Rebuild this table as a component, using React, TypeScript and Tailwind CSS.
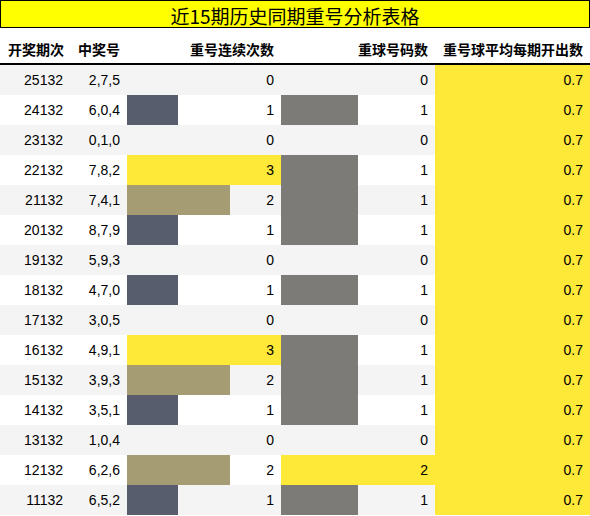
const rows = [
  { period: "25132", nums: "2,7,5", streak: 0, repeat: 0 },
  { period: "24132", nums: "6,0,4", streak: 1, repeat: 1 },
  { period: "23132", nums: "0,1,0", streak: 0, repeat: 0 },
  { period: "22132", nums: "7,8,2", streak: 3, repeat: 1 },
  { period: "21132", nums: "7,4,1", streak: 2, repeat: 1 },
  { period: "20132", nums: "8,7,9", streak: 1, repeat: 1 },
  { period: "19132", nums: "5,9,3", streak: 0, repeat: 0 },
  { period: "18132", nums: "4,7,0", streak: 1, repeat: 1 },
  { period: "17132", nums: "3,0,5", streak: 0, repeat: 0 },
  { period: "16132", nums: "4,9,1", streak: 3, repeat: 1 },
  { period: "15132", nums: "3,9,3", streak: 2, repeat: 1 },
  { period: "14132", nums: "3,5,1", streak: 1, repeat: 1 },
  { period: "13132", nums: "1,0,4", streak: 0, repeat: 0 },
  { period: "12132", nums: "6,2,6", streak: 2, repeat: 2 },
  { period: "11132", nums: "6,5,2", streak: 1, repeat: 1 },
];

const streakColor: Record<number, string> = {
  0: "bg-transparent",
  1: "bg-[#575d6d]",
  2: "bg-[#a59c74]",
  3: "bg-[#fee838]",
};

const repeatColor: Record<number, string> = {
  0: "bg-transparent",
  1: "bg-[#7c7b78]",
  2: "bg-[#fee838]",
};

function BarCell({ value, max, color }: { value: number; max: number; color: string }) {
  return (
    <div className="grid h-full">
      <div className={`col-start-1 row-start-1 h-full ${color}`} style={{ width: `${(value / max) * 100}%` }} />
      <div className="col-start-1 row-start-1 flex items-center justify-end pr-[7px]">{value}</div>
    </div>
  );
}

export default function App() {
  return (
    <div className="w-[590px] bg-white text-[14px] text-black" style={{ fontFamily: '"Liberation Sans", "Noto Sans CJK SC", sans-serif' }}>
      <div className="flex h-[28px] items-center justify-center border border-black bg-[#ffff00] pt-[3px] text-[19px] leading-none" style={{ fontFamily: '"Noto Sans CJK SC", sans-serif' }}>
        近15期历史同期重号分析表格
      </div>
      <div
        className="grid h-[37px] grid-cols-[70px_57px_154px_154px_155px] items-end border-b-2 border-black pb-[4px] font-bold leading-5"
        style={{ fontFamily: '"Noto Sans CJK SC", sans-serif' }}
      >
        <div className="pr-[6px] text-right">开奖期次</div>
        <div className="pr-[7px] text-right">中奖号</div>
        <div className="pr-[7px] text-right">重号连续次数</div>
        <div className="pr-[7px] text-right">重球号码数</div>
        <div className="pr-[7px] text-right">重号球平均每期开出数</div>
      </div>
      {rows.map((r, i) => (
        <div
          key={r.period}
          className={`grid h-[30px] grid-cols-[70px_57px_154px_154px_155px] ${i % 2 === 0 ? "bg-[#f4f4f4]" : "bg-white"}`}
        >
          <div className="flex items-center justify-end pr-[7px]">{r.period}</div>
          <div className="flex items-center justify-end pr-[7px]">{r.nums}</div>
          <BarCell value={r.streak} max={3} color={streakColor[r.streak]} />
          <BarCell value={r.repeat} max={2} color={repeatColor[r.repeat]} />
          <div className="flex items-center justify-end bg-[#fee838] pr-[7px]">0.7</div>
        </div>
      ))}
    </div>
  );
}
